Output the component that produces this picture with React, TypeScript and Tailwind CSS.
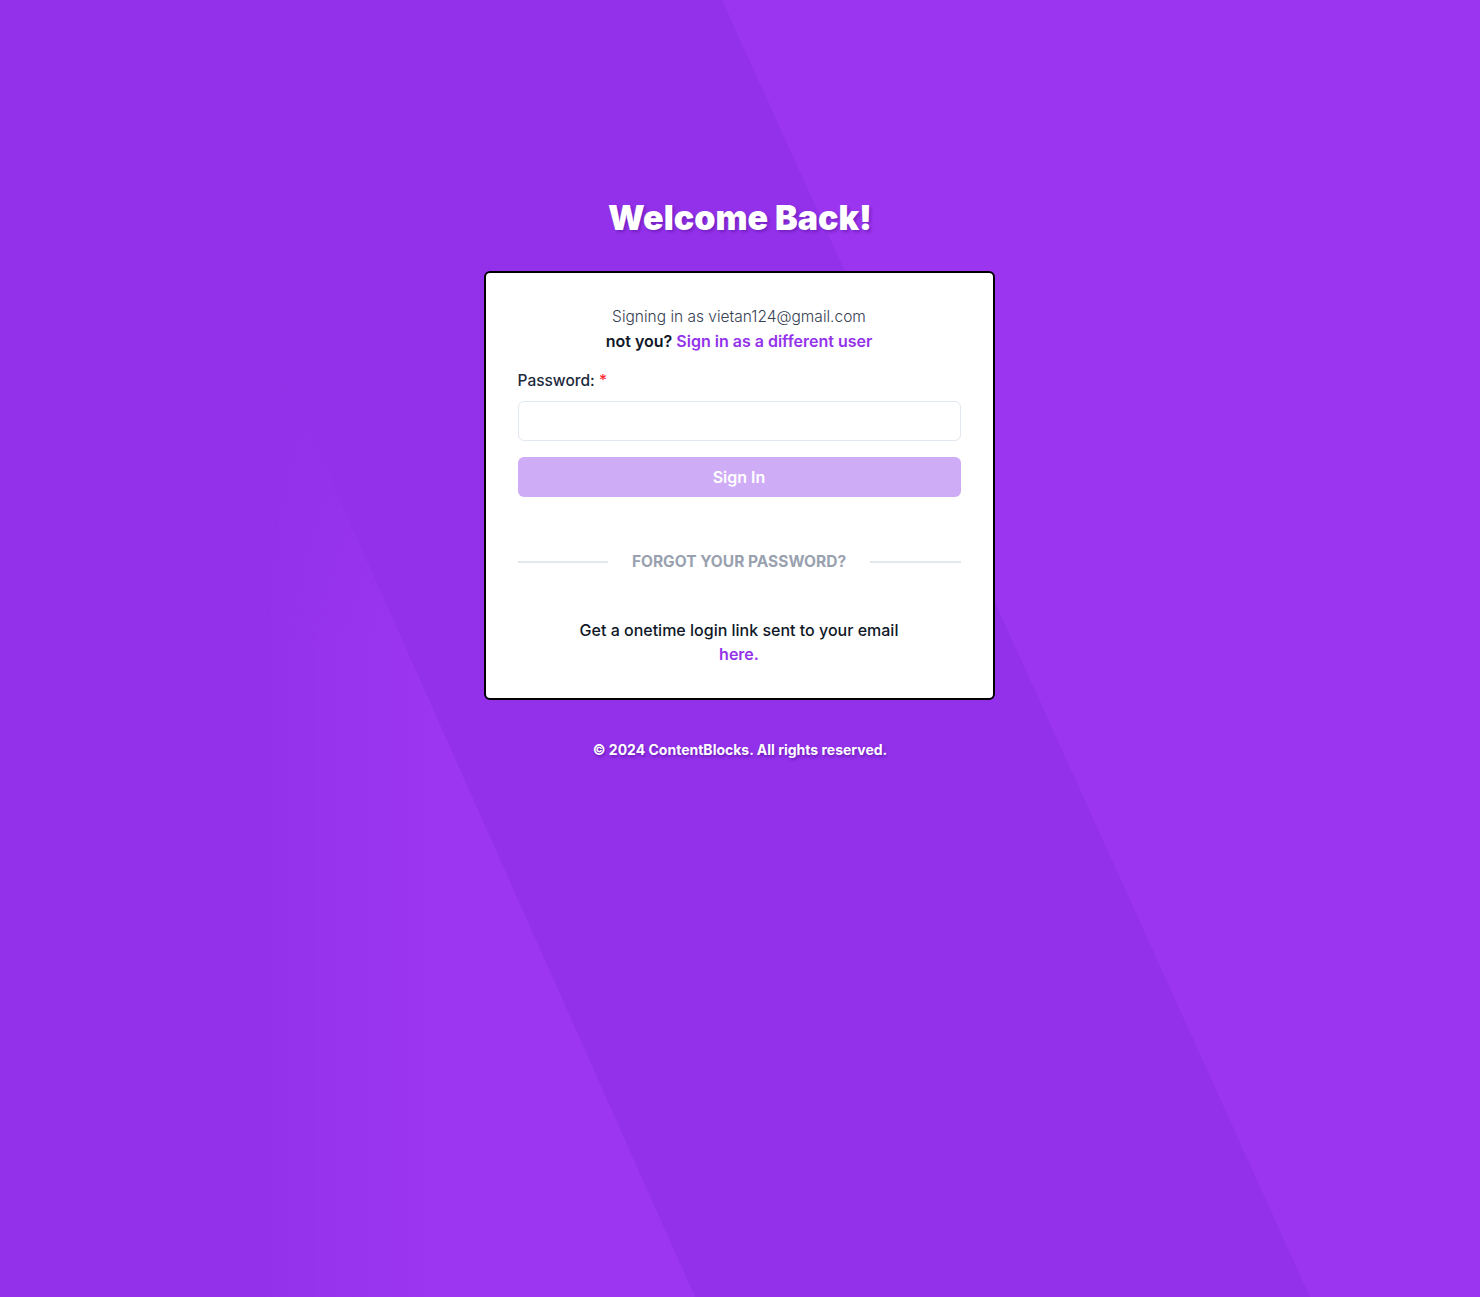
import { useState } from "react";

function Backdrop() {
  return (
    <svg
      className="absolute inset-0 h-full w-full"
      viewBox="0 0 1480 1297"
      preserveAspectRatio="none"
      aria-hidden="true"
    >
      <defs>
        <linearGradient id="bandX" gradientUnits="userSpaceOnUse" x1="250" y1="0" x2="430" y2="0">
          <stop offset="0" stopColor="#9c36f0" stopOpacity="0" />
          <stop offset="1" stopColor="#9c36f0" stopOpacity="1" />
        </linearGradient>
        <linearGradient id="bandY" gradientUnits="userSpaceOnUse" x1="0" y1="330" x2="0" y2="650">
          <stop offset="0" stopColor="#fff" stopOpacity="0" />
          <stop offset="1" stopColor="#fff" stopOpacity="1" />
        </linearGradient>
        <mask id="bandMask">
          <rect x="0" y="0" width="1480" height="1297" fill="url(#bandY)" />
        </mask>
      </defs>
      <rect x="0" y="0" width="1480" height="1297" fill="#9331ea" />
      <polygon points="722,0 1480,0 1480,1297 1310,1297" fill="#9b35ef" />
      <polygon points="0,0 117,0 695,1297 0,1297" fill="url(#bandX)" mask="url(#bandMask)" />
    </svg>
  );
}

export default function App() {
  const [password, setPassword] = useState("");

  return (
    <div className="relative min-h-[1297px] w-full overflow-hidden font-['Inter','Noto_Sans',sans-serif]">
      <Backdrop />
      <div className="relative flex flex-col items-center pt-[198px]">
        <h1 className="text-[34px] leading-[40px] font-black text-white [text-shadow:2px_2px_3px_rgba(60,0,120,0.35)]">
          Welcome Back!
        </h1>

        <div className="mt-[33px] w-[511px] -translate-x-px rounded-md border-2 border-black bg-white px-8 pt-8 pb-8">
          <div className="text-center">
            <p className="text-[15.5px] leading-6 font-light text-gray-700">Signing in as vietan124@gmail.com</p>
            <p className="text-[16px] leading-6 font-semibold text-gray-900">
              not you?{" "}
              <a href="#" className="text-[#9333ea]">
                Sign in as a different user
              </a>
            </p>
          </div>

          <form className="mt-4" onSubmit={(e) => e.preventDefault()}>
            <label className="block">
              <span className="block text-[15.5px] leading-6 font-medium text-slate-800">
                Password: <span className="text-red-500">*</span>
              </span>
              <input
                type="password"
                value={password}
                onChange={(e) => setPassword(e.target.value)}
                className="mt-2 block h-10 w-full rounded-md border border-slate-200 px-3 text-sm focus:outline-none"
              />
            </label>
            <button
              type="submit"
              disabled={!password}
              className="mt-4 h-10 w-full rounded-md bg-[#cfacf6] text-[16px] font-semibold text-white"
            >
              Sign In
            </button>
          </form>

          <div className="mt-[53px] flex items-center gap-6">
            <div className="h-[2px] flex-1 bg-slate-200" />
            <span className="text-[15.5px] leading-6 font-bold text-gray-400 uppercase">
              Forgot your password?
            </span>
            <div className="h-[2px] flex-1 bg-slate-200" />
          </div>

          <div className="mt-[44px] text-center text-[16px] leading-6 font-medium text-gray-900">
            <p>Get a onetime login link sent to your email</p>
            <a href="#" className="font-semibold text-[#9333ea]">
              here.
            </a>
          </div>
        </div>

        <p className="mt-10 text-sm leading-5 font-bold text-white [text-shadow:1px_2px_3px_rgba(60,0,120,0.45)]">
          © 2024 ContentBlocks. All rights reserved.
        </p>
      </div>
    </div>
  );
}
